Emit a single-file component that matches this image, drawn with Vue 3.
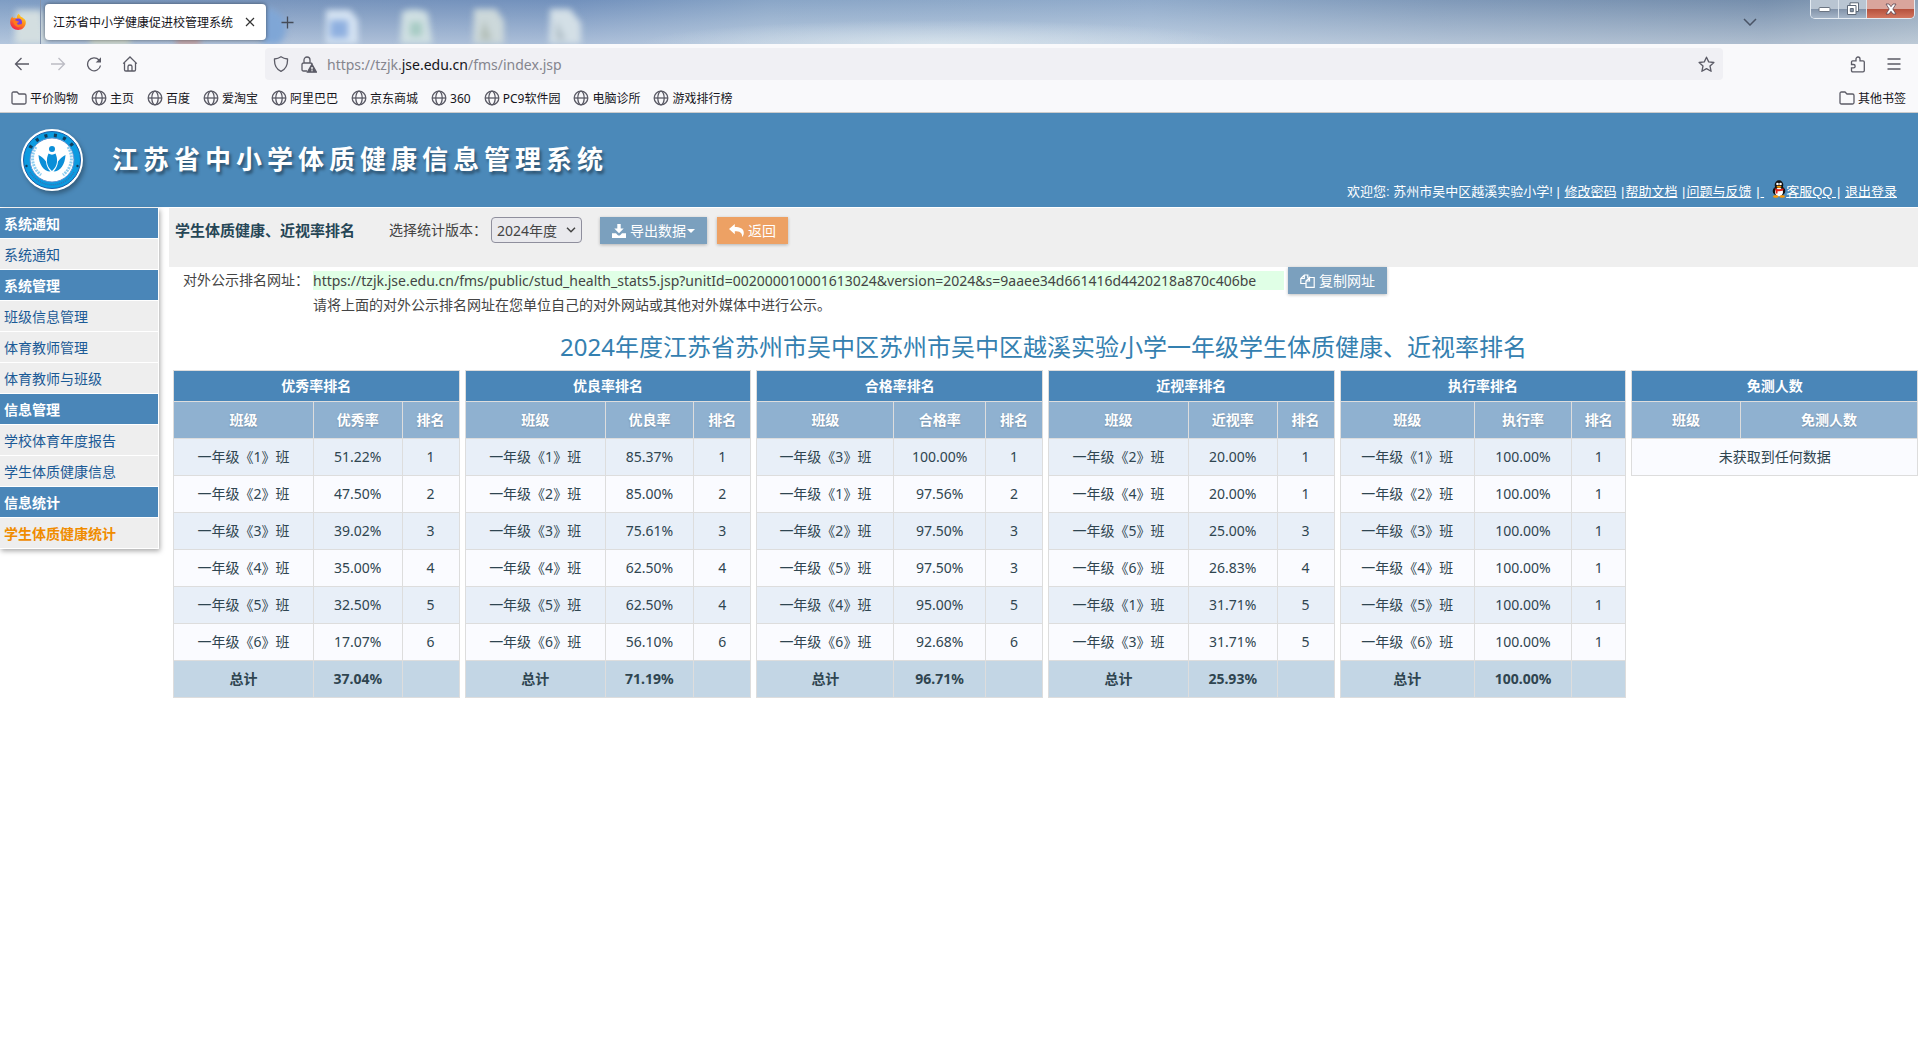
<script setup>
const bookmarks = ['主页', '百度', '爱淘宝', '阿里巴巴', '京东商城', '360', 'PC9软件园', '电脑诊所', '游戏排行榜']

const menu = [
  { text: '系统通知', kind: 'head' },
  { text: '系统通知' },
  { text: '系统管理', kind: 'head' },
  { text: '班级信息管理' },
  { text: '体育教师管理' },
  { text: '体育教师与班级' },
  { text: '信息管理', kind: 'head' },
  { text: '学校体育年度报告' },
  { text: '学生体质健康信息' },
  { text: '信息统计', kind: 'head' },
  { text: '学生体质健康统计', kind: 'current' },
]

const rankings = [
  { title: '优秀率排名', rate: '优秀率', cols: [49, 31, 20], total: '37.04%',
    rows: [[1, '51.22%', 1], [2, '47.50%', 2], [3, '39.02%', 3], [4, '35.00%', 4], [5, '32.50%', 5], [6, '17.07%', 6]] },
  { title: '优良率排名', rate: '优良率', cols: [49, 31, 20], total: '71.19%',
    rows: [[1, '85.37%', 1], [2, '85.00%', 2], [3, '75.61%', 3], [4, '62.50%', 4], [5, '62.50%', 4], [6, '56.10%', 6]] },
  { title: '合格率排名', rate: '合格率', cols: [48, 32, 20], total: '96.71%',
    rows: [[3, '100.00%', 1], [1, '97.56%', 2], [2, '97.50%', 3], [5, '97.50%', 3], [4, '95.00%', 5], [6, '92.68%', 6]] },
  { title: '近视率排名', rate: '近视率', cols: [49, 31, 20], total: '25.93%',
    rows: [[2, '20.00%', 1], [4, '20.00%', 1], [5, '25.00%', 3], [6, '26.83%', 4], [1, '31.71%', 5], [3, '31.71%', 5]] },
  { title: '执行率排名', rate: '执行率', cols: [47, 34, 19], total: '100.00%',
    rows: [[1, '100.00%', 1], [2, '100.00%', 1], [3, '100.00%', 1], [4, '100.00%', 1], [5, '100.00%', 1], [6, '100.00%', 1]] },
]
</script>

<template>
  <div class="browser">
    <div class="tabstrip">
      <svg class="glass" width="620" height="44" viewBox="0 0 620 44" aria-hidden="true">
        <path d="M16 10h26l5 40H14z" fill="#d3dee0" />
        <path d="M90 38h40v10H90z" fill="#dfe3c8" />
        <path d="M176 40h24v8h-24z" fill="#d98a78" />
        <path d="M262 8c16 0 24 10 24 20s-6 16-12 18h-12z" fill="#7fa6d6" />
        <path d="M326 10h24l8 10v28h-32z" fill="#d5e3f2" /><path d="M330 20h18v18h-18z" fill="#8fb0e0" />
        <path d="M402 12c8-4 20-3 26 1l5 35h-33z" fill="#cfdfe2" /><path d="M410 22h12v14h-12z" fill="#a7cbc4" />
        <path d="M474 9h22l8 12v27h-31z" fill="#ccd8da" /><path d="M484 20l8 20h-12z" fill="#b3bfb9" />
        <path d="M550 9h20l11 14v25h-32z" fill="#d3dfe6" /><path d="M556 20l10 20h-10z" fill="#b4c2cb" />
      </svg>
      <div class="pinned">
        <svg width="18" height="18" viewBox="0 0 18 18">
          <defs>
            <linearGradient id="fox" x1="0.8" y1="0" x2="0.2" y2="1">
              <stop offset="0" stop-color="#ffe226" /><stop offset="0.45" stop-color="#ff8a1c" /><stop offset="1" stop-color="#f0154f" />
            </linearGradient>
          </defs>
          <path d="M9.500 .8c1.200 1 2 2 2.400 3.200 1-.3 1.600.2 2 1C16.300 6.300 17 8 16.800 10c-.4 4.200-3.700 7-7.600 7C5 17 1.500 13.900 1.200 9.800 1 7.400 1.800 5 3.400 3.400c.1.700.4 1.200.8 1.600C5.600 4.600 7 4.800 7.800 5.300 7.700 3.500 8.300 1.900 9.500.8z" fill="url(#fox)" />
          <circle cx="9.200" cy="9.300" r="3.800" fill="#7a3ee0" />
          <path d="M4.200 7.800c1.500-.8 3-.5 4 .4l2 .2c-.3 1-1.500 1.200-2 1.600-.3 1.200.8 2 2.200 1.600 1.400-.4 2.300-.3 2.600.2-1 1.800-3 2.500-5 1.900-2.200-.7-3.800-2.900-3.800-5.900z" fill="#ff7a1a" />
        </svg>
      </div>
      <div class="tab">
        <span>江苏省中小学健康促进校管理系统</span>
        <button class="plain" aria-label="关闭标签页">
          <svg width="10" height="10" viewBox="0 0 10 10" stroke="#333" stroke-width="1.200"><path d="M1 1l8 8M9 1L1 9" /></svg>
        </button>
      </div>
      <button class="plain newtab" aria-label="新建标签页">
        <svg width="13" height="13" viewBox="0 0 13 13" stroke="#444b58" stroke-width="1.300"><path d="M6.500 .5v12M.5 6.500h12" /></svg>
      </button>
      <button class="plain alltabs" aria-label="列出所有标签页">
        <svg width="14" height="8" viewBox="0 0 14 8" fill="none" stroke="#4a5466" stroke-width="1.500"><path d="M1 1l6 6 6-6" /></svg>
      </button>
      <div class="winbuttons">
        <button aria-label="最小化"><svg width="13" height="7" viewBox="0 0 13 7"><rect x="1" y="1.500" width="11" height="4" rx="1" fill="#fff" stroke="#6a7482" /></svg></button>
        <button aria-label="还原"><svg width="14" height="14" viewBox="0 0 14 14" fill="#fff" stroke="#5d6877"><path d="M4 .8h8.500v8.700H4z" /><path d="M1.500 3.500h8.500v9H1.500z" /><path d="M4.300 6.500h3v3.200h-3z" fill="#8693a5" /></svg></button>
        <button class="close" aria-label="关闭"><svg width="14" height="12" viewBox="0 0 14 12"><path d="M2 1h3l2 2.700L9 1h3L8.800 6 12 11H9L7 8.300 5 11H2l3.200-5z" fill="#fff" stroke="#5a4550" stroke-width=".8" /></svg></button>
      </div>
    </div>

    <div class="navbar">
      <div class="navbuttons">
        <button class="plain" aria-label="后退"><svg width="16" height="16" viewBox="0 0 16 16" class="ico"><path d="M15 8H1.500M7.500 2l-6 6 6 6" /></svg></button>
        <button class="plain" aria-label="前进"><svg width="16" height="16" viewBox="0 0 16 16" class="ico faint"><path d="M1 8h13.500M8.500 2l6 6-6 6" /></svg></button>
        <button class="plain" aria-label="刷新"><svg width="16" height="16" viewBox="0 0 16 16" class="ico"><path d="M14.500 9.500A6.500 6.500 0 1 1 13 4" /><path d="M15 1.200v5.300h-5.300z" fill="#5b5b66" stroke="none" /></svg></button>
        <button class="plain" aria-label="主页"><svg width="16" height="16" viewBox="0 0 16 16" class="ico"><path d="M1.200 7.600L8 1l6.800 6.600M2.500 6.500v7.200c0 .8.500 1.300 1.300 1.300h8.400c.8 0 1.300-.5 1.300-1.300V6.500M6 15v-4.500C6 9.500 6.800 9 8 9s2 .5 2 1.500V15" /></svg></button>
      </div>
      <div class="urlbar">
        <svg width="16" height="16" viewBox="0 0 16 16" class="ico"><path d="M8 .8c2 1.400 4 2 6.500 2.200C14.800 8.500 13 13 8 15.300 3 13 1.200 8.500 1.500 3 4 2.800 6 2.200 8 .8z" /></svg>
        <svg width="17" height="17" viewBox="0 0 17 17" class="ico"><path d="M7 15H3.500c-1 0-1.500-.5-1.500-1.500V8.500C2 7.500 2.500 7 3.500 7h7c1 0 1.500.5 1.500 1.200M4 7V4a3 3 0 0 1 6 0v3" /><path d="M12 8.200l4.500 8h-9z" fill="#5b5b66" /><path d="M12 11v2.500M12 14.300v1" stroke="#fff" /></svg>
        <span class="address">https://tzjk.<b>jse.edu.cn</b>/fms/index.jsp</span>
        <button class="plain" aria-label="收藏"><svg width="17" height="17" viewBox="0 0 17 17" class="ico"><path d="M8.500 1.200l2.200 4.700 5.200.6-3.900 3.500 1.100 5.300-4.600-2.700-4.600 2.700L5 10 1.100 6.500l5.200-.6z" stroke-linejoin="round" /></svg></button>
      </div>
      <div class="navend">
        <button class="plain" aria-label="扩展"><svg width="16" height="17" viewBox="0 0 16 17" class="ico"><path d="M1.500 8.500V6c0-.8.500-1.200 1.200-1.200H6V3a2 2 0 0 1 4 0v1.800h3c.8 0 1.300.4 1.300 1.200v8.500c0 .8-.5 1.300-1.300 1.300H2.700c-.7 0-1.200-.5-1.200-1.300v-2.700h2a1.600 1.600 0 0 0 0-3.300z" /></svg></button>
        <button class="plain" aria-label="菜单"><svg width="14" height="12" viewBox="0 0 14 12" class="ico"><path d="M.5 1h13M.5 6h13M.5 11h13" /></svg></button>
      </div>
    </div>

    <div class="bookmarks">
      <a href="#"><svg width="16" height="14" viewBox="0 0 16 14" class="ico"><path d="M1 2.500C1 1.500 1.500 1 2.500 1H6l2 2h5.500c1 0 1.500.5 1.500 1.500v7c0 1-.5 1.500-1.500 1.500h-11c-1 0-1.500-.5-1.500-1.500z" /></svg>平价购物</a>
      <a v-for="b in bookmarks" :key="b" href="#"><svg width="16" height="16" viewBox="0 0 16 16" class="ico"><circle cx="8" cy="8" r="6.800" /><ellipse cx="8" cy="8" rx="3.200" ry="6.800" /><path d="M1.200 8h13.600" /></svg>{{ b }}</a>
      <a href="#" class="other"><svg width="16" height="14" viewBox="0 0 16 14" class="ico"><path d="M1 2.500C1 1.500 1.500 1 2.500 1H6l2 2h5.500c1 0 1.500.5 1.500 1.500v7c0 1-.5 1.500-1.500 1.500h-11c-1 0-1.500-.5-1.500-1.500z" /></svg>其他书签</a>
    </div>
  </div>

  <header class="banner">
    <svg class="logo" width="64" height="64" viewBox="0 0 64 64">
      <circle cx="32" cy="32" r="31" fill="#fff" />
      <circle cx="32" cy="32" r="28.500" fill="#0b9be0" stroke="#1b5fa8" stroke-width="1" />
      <path d="M10 20A25.300 25.300 0 0 1 54 20" fill="none" stroke="#123d5c" stroke-width="3.500" stroke-dasharray="3 6.500" />
      <path d="M10 44A25.300 25.300 0 0 0 54 44" fill="none" stroke="#3d6fb0" stroke-width="1.500" stroke-dasharray="1 1" />
      <circle cx="6.500" cy="38" r="1.200" fill="#123d5c" /><circle cx="57.500" cy="38" r="1.200" fill="#123d5c" />
      <circle cx="32" cy="32" r="22" fill="#fff" stroke="#5b8fd0" stroke-width="1" />
      <path d="M16 19C10 28 12 40 21 47M48 19c6 9 4 21-5 28" fill="none" stroke="#8ccdf0" stroke-width="3" stroke-dasharray="2 1" />
      <g fill="#0b8fd8">
        <circle cx="32" cy="21" r="3" />
        <path d="M32 43c-6-5-6-12-3.500-17.500 2 1.500 5 1.500 7 0C38 31 38 38 32 43z" />
        <path d="M30.500 43.500c-7 0-11.500-7.500-12-16.500 3 1.500 5.500 3.500 7.500 6.500.3 4 2 7.500 4.500 10z" />
        <path d="M33.500 43.500c7 0 11.500-7.500 12-16.500-3 1.500-5.500 3.500-7.500 6.500-.3 4-2 7.500-4.500 10z" />
      </g>
    </svg>
    <h1>江苏省中小学体质健康信息管理系统</h1>
    <div class="account">
      欢迎您: 苏州市吴中区越溪实验小学! | <a href="#">修改密码</a> |<a href="#">帮助文档</a> |<a href="#">问题与反馈</a> |<a href="#" class="qq">&nbsp;<svg width="14" height="18" viewBox="0 0 14 18">
        <ellipse cx="7" cy="11" rx="6.300" ry="5" fill="#111" /><ellipse cx="7" cy="5" rx="4.300" ry="4.700" fill="#111" />
        <ellipse cx="7" cy="12" rx="4" ry="4.300" fill="#fff" />
        <circle cx="5.500" cy="4" r="1.300" fill="#fff" /><circle cx="8.500" cy="4" r="1.300" fill="#fff" />
        <ellipse cx="7" cy="6.700" rx="2.500" ry="1" fill="#f90" />
        <path d="M2.500 8.200c3 1.500 6 1.500 9 0v2c-2 1-4 1.200-6 1v2.300H3.700v-3z" fill="#e2231a" />
        <ellipse cx="3.800" cy="16.500" rx="2.800" ry="1.300" fill="#f90" /><ellipse cx="10.200" cy="16.500" rx="2.800" ry="1.300" fill="#f90" />
      </svg>客服QQ&nbsp;</a>| <a href="#">退出登录</a>
    </div>
  </header>

  <div class="body">
    <nav class="sidebar">
      <template v-for="(m, i) in menu" :key="i">
        <div v-if="m.kind === 'head'" class="item head">{{ m.text }}</div>
        <a v-else href="#" class="item" :class="m.kind">{{ m.text }}</a>
      </template>
    </nav>

    <main>
      <div class="toolbar">
        <h2>学生体质健康、近视率排名</h2>
        <label for="version">选择统计版本：</label>
        <span class="selectwrap">
          <select id="version"><option>2024年度</option></select>
          <svg width="10" height="6" viewBox="0 0 10 6" fill="none" stroke="#444" stroke-width="1.500"><path d="M1 .8l4 4 4-4" /></svg>
        </span>
        <button class="btn export">
          <svg width="14" height="14" viewBox="0 0 14 14" fill="#fff"><path d="M5.300 0h3.400v4.500h3L7 9.200 2.300 4.500h3z" /><path d="M0 9.300h4l1.600 1.600c.8.800 2 .8 2.800 0L10 9.300h4V14H0z" /></svg>
          <span>导出数据</span>
          <svg width="8" height="4" viewBox="0 0 8 4" fill="#fff"><path d="M0 0h8L4 4z" /></svg>
        </button>
        <button class="btn back">
          <svg width="15" height="13" viewBox="0 0 15 13" fill="#fff"><path d="M5.800 0v3c5 0 9 1.200 9 6 0 1.700-.7 3-1.800 4 .6-4.500-2.500-5.700-7.200-5.700v3L0 5.100z" /></svg>
          <span>返回</span>
        </button>
      </div>

      <div class="publish">
        <span class="publabel">对外公示排名网址：</span>
        <div>
          <div class="linkrow">
            <span class="link">https://tzjk.jse.edu.cn/fms/public/stud_health_stats5.jsp?unitId=002000010001613024&amp;version=2024&amp;s=9aaee34d661416d4420218a870c406be</span>
            <button class="btn copy">
              <svg width="15" height="15" viewBox="0 0 15 15" fill="none" stroke="#fff" stroke-width="1.200"><path d="M5.500 10.500H.8V5.500L4.300 2h3.500v3M4.300 2v3.500H.8M9.500 4.500h4.700v9.800H6V8l3.500-3.500V8H6" /></svg>
              <span>复制网址</span>
            </button>
          </div>
          <p>请将上面的对外公示排名网址在您单位自己的对外网站或其他对外媒体中进行公示。</p>
        </div>
      </div>

      <h3>2024年度江苏省苏州市吴中区苏州市吴中区越溪实验小学一年级学生体质健康、近视率排名</h3>

      <div class="tables">
        <table v-for="t in rankings" :key="t.title">
          <colgroup><col v-for="(c, i) in t.cols" :key="i" :style="{ width: c + '%' }"></colgroup>
          <thead>
            <tr class="title"><th colspan="3">{{ t.title }}</th></tr>
            <tr><th>班级</th><th>{{ t.rate }}</th><th>排名</th></tr>
          </thead>
          <tbody>
            <tr v-for="r in t.rows" :key="r[0]"><td>一年级《{{ r[0] }}》班</td><td>{{ r[1] }}</td><td>{{ r[2] }}</td></tr>
          </tbody>
          <tfoot><tr><td>总计</td><td>{{ t.total }}</td><td></td></tr></tfoot>
        </table>
        <table>
          <colgroup><col class="narrow"><col></colgroup>
          <thead>
            <tr class="title"><th colspan="2">免测人数</th></tr>
            <tr><th>班级</th><th>免测人数</th></tr>
          </thead>
          <tbody><tr class="empty"><td colspan="2">未获取到任何数据</td></tr></tbody>
        </table>
      </div>
    </main>
  </div>
</template>

<style>
body {
  background: #fff;
  font-family: "Noto Sans", "Noto Sans CJK SC", sans-serif;
  font-size: 14px;
  color: #444;
}
</style>

<style scoped>
* { box-sizing: border-box; }
svg { flex: none; }
button, select { font: inherit; color: inherit; }
.plain { display: flex; padding: 0; border: 0; background: none; }
.ico { fill: none; stroke: #5b5b66; stroke-width: 1.3; }
.faint { stroke: #bcbcc4; }

.tabstrip {
  position: relative;
  isolation: isolate;
  display: flex;
  align-items: center;
  height: 44px;
  overflow: hidden;
  background:
    radial-gradient(ellipse 300px 24px at 940px 44px, rgba(225, 235, 240, .7), transparent),
    linear-gradient(to bottom, rgba(60, 100, 150, .2), rgba(215, 225, 235, .5)),
    linear-gradient(to right, #8fabcf, #86a0c6 18%, #7f9cc6 30%, #9db6d3 40%, #a6bdd8 60%, #91a7c2 75%, #8499b2 92%, #a3b3c2);
}
.glass { position: absolute; left: 0; top: 0; z-index: -1; filter: blur(3px); }
.pinned { display: flex; align-items: center; width: 41px; height: 44px; padding-left: 9px; border-right: 1px solid #8494ad; }
.tab {
  display: flex;
  align-items: center;
  justify-content: space-between;
  width: 221px;
  height: 36px;
  margin-left: 4px;
  padding: 0 11px 0 8px;
  border-radius: 4px;
  background: #fff;
  box-shadow: 0 0 4px rgba(0, 0, 0, .5);
  font-size: 12px;
  color: #15141a;
}
.newtab { margin-left: 15px; }
.alltabs { margin-left: auto; margin-right: 53px; }
.winbuttons {
  display: flex;
  align-self: flex-start;
  height: 19px;
  margin-right: 3px;
  border: 1px solid #e4ebf2;
  border-top: 0;
  border-radius: 0 0 5px 5px;
  overflow: hidden;
}
.winbuttons button {
  display: flex;
  align-items: center;
  justify-content: center;
  width: 28px;
  padding: 0;
  border: 0;
  border-right: 1px solid #dce4ec;
  background: linear-gradient(#b9c5d2 50%, #8192a8 50%, #a5b5c8);
}
.winbuttons .close { width: 47px; border: 0; background: linear-gradient(#d9a59c 50%, #b5503c 50%, #d3765f); }

.navbar { display: flex; align-items: center; height: 40px; background: #f9f9fb; }
.navbuttons { display: flex; gap: 20px; width: 265px; padding-left: 14px; }
.urlbar {
  display: flex;
  align-items: center;
  flex: 1;
  height: 32px;
  padding: 0 8px;
  border-radius: 4px;
  background: #f0f0f4;
}
.urlbar svg + svg { margin-left: 11px; }
.address { flex: 1; margin-left: 10px; color: #85858e; }
.address b { font-weight: 400; color: #15141a; }
.navend { display: flex; align-items: center; justify-content: flex-end; gap: 21px; width: 195px; padding-right: 17px; }

.bookmarks {
  display: flex;
  align-items: center;
  gap: 13px;
  height: 29px;
  padding: 0 12px 0 11px;
  background: #f9f9fb;
  border-bottom: 1px solid #ccc;
  font-size: 12px;
}
.bookmarks a { display: flex; align-items: center; gap: 3px; color: #15141a; text-decoration: none; white-space: nowrap; }
.bookmarks .other { margin-left: auto; }

.banner { display: flex; align-items: center; height: 94px; padding: 0 20px; background: #4b89b9; color: #fff; }
.logo { filter: drop-shadow(2px 3px 2px rgba(0, 0, 0, .3)); }
.banner h1 {
  margin: 0 0 2px 28px;
  font-size: 26px;
  line-height: 36px;
  font-weight: 700;
  letter-spacing: 5px;
  text-shadow: 2px 3px 3px rgba(0, 0, 0, .4);
  white-space: nowrap;
}
.account {
  align-self: flex-end;
  margin-left: auto;
  padding-bottom: 4px;
  font-family: "Liberation Sans", "Noto Sans CJK SC", sans-serif;
  font-size: 13px;
  line-height: 22px;
  white-space: nowrap;
}
.account a { margin: 0 1px; color: #fff; }
.qq svg { margin-left: 8px; vertical-align: -2px; }

.body { display: flex; align-items: flex-start; gap: 10px; padding-top: 1px; }
.sidebar { flex: none; width: 159px; border-right: 1px solid #fff; box-shadow: 1px 2px 5px rgba(0, 0, 0, .35); }
.item {
  display: block;
  height: 31px;
  padding-left: 4px;
  border-bottom: 1px solid #fff;
  background: #eee;
  color: #1b5a96;
  line-height: 31px;
  text-decoration: none;
}
.head { background: #4a86b8; color: #fff; font-weight: 700; }
.current { color: #f08c00; font-weight: 700; }

main { flex: 1; min-width: 0; }
.toolbar { display: flex; align-items: flex-start; height: 59px; padding: 9px 6px; background: #efefef; line-height: 26px; }
.toolbar h2 { margin: 0; font-size: 15px; color: #264656; line-height: 26px; }
.toolbar label { margin-left: 34px; }
.selectwrap { position: relative; display: flex; margin-left: 4px; }
.selectwrap svg { position: absolute; right: 6px; top: 10px; pointer-events: none; }
select {
  appearance: none;
  width: 91px;
  height: 26px;
  padding: 0 5px 2px;
  border: 1px solid #8f8f9d;
  border-radius: 4px;
  background: #e9e9ed;
}
.btn {
  display: flex;
  align-items: center;
  gap: 4px;
  height: 27px;
  padding: 0 12px;
  border: 0;
  color: #fff;
  background: #7ba0be;
  box-shadow: 0 1px 3px rgba(0, 0, 0, .25);
  white-space: nowrap;
}
.export { margin-left: 18px; }
.export span { margin-right: -3px; }
.back { margin-left: 10px; background: #eda164; }

.publish { display: flex; padding-left: 14px; line-height: 26px; }
.publabel { width: 130px; }
.linkrow { display: flex; align-items: center; gap: 4px; }
.link { min-width: 971px; background: #e0ffe6; line-height: 19px; }
.publish p { margin: 0; line-height: 22px; }

h3 { margin: 15px 0 7px; font-size: 24px; line-height: 32px; font-weight: 400; color: #3480b0; text-align: center; }

.tables { display: grid; grid-template-columns: repeat(6, 1fr); gap: 5px; align-items: start; padding-left: 4px; color: #2f4550; }
table { width: 100%; border-collapse: collapse; table-layout: fixed; text-align: center; line-height: 20px; }
.narrow { width: 38%; }
th, td { height: 37px; padding: 0; border: 1px solid #ddd; }
thead th { background: #8fb1d0; color: #fff; text-shadow: 0 1px 2px rgba(0, 0, 0, .2); }
thead .title th { height: 31px; background: #4a86b8; text-shadow: none; }
tbody tr { background: #fafbff; }
tbody tr:nth-child(odd) { background: #e8eff8; }
tbody .empty:nth-child(odd) { background: #fafbff; }
tfoot td { background: #c3d6e5; font-weight: 700; }
</style>
